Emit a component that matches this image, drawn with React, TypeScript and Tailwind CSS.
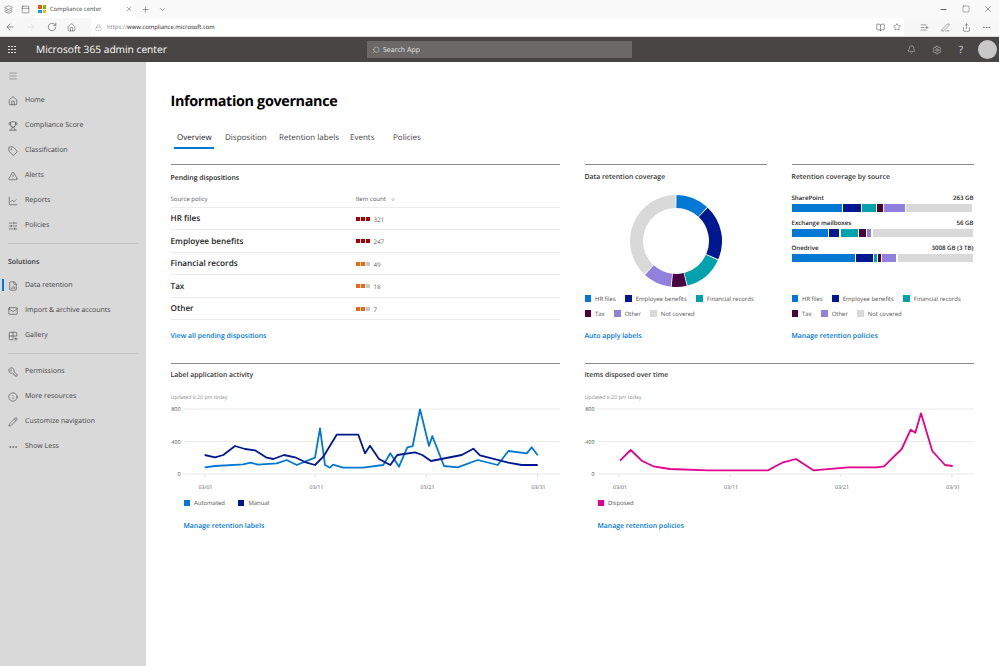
import React from "react";
import {
  ArrowLeft, ArrowRight, RotateCw, Home, Lock, BookOpen, Star, Plus, X, ChevronDown, Minus, Square,
  Ellipsis, Bell, Settings, Search, Menu, Trophy, Tag, TriangleAlert, ChartLine, SlidersHorizontal,
  FileChartColumn, Mail, Grid2x2Plus, KeyRound, Info, Pencil, ArrowDown, PenLine, Share, ListPlus, Layers, PanelTop,
} from "lucide-react";

const C = { hr: "#0078d4", emp: "#00188f", fin: "#00a2ad", tax: "#4b003f", oth: "#9180dd", not: "#d9d9d9" };

const nav1 = [
  { I: Home, t: "Home" },
  { I: Trophy, t: "Compliance Score" },
  { I: Tag, t: "Classification" },
  { I: TriangleAlert, t: "Alerts" },
  { I: ChartLine, t: "Reports" },
  { I: SlidersHorizontal, t: "Policies" },
];
const nav2 = [
  { I: FileChartColumn, t: "Data retention", active: true },
  { I: Mail, t: "Import & archive accounts" },
  { I: Grid2x2Plus, t: "Gallery" },
];
const nav3 = [
  { I: KeyRound, t: "Permissions", flip: true },
  { I: Info, t: "More resources" },
  { I: Pencil, t: "Customize navigation" },
  { I: Ellipsis, t: "Show Less" },
];

function NavItem({ I, t, active, flip }: { I: any; t: string; active?: boolean; flip?: boolean }) {
  return (
    <div className="relative flex h-[25px] items-center pl-[8px] text-[7px] text-[#444]">
      {active && <span className="absolute left-[2px] top-[6px] h-[12px] w-[2px] bg-[#0078d4]" />}
      <I size={10} strokeWidth={1.3} className={flip ? "-scale-x-100 text-[#333]" : "text-[#333]"} />
      <span className="ml-[7px] pt-[2px]">{t}</span>
    </div>
  );
}

function Legend({ items, wide }: { items: [string, string][]; wide?: boolean }) {
  return (
    <div className={`flex flex-wrap gap-y-[4px] text-[5.95px] ${wide ? "gap-x-[13px]" : "gap-x-[9.5px]"}`}>
      {items.map(([t, c]) => (
        <div key={t} className="flex h-[11px] items-center gap-[4px] text-[#555]">
          <span className="h-[6.5px] w-[6.5px]" style={{ background: c }} />
          <span className="pt-[1px]">{t}</span>
        </div>
      ))}
    </div>
  );
}

const coverage: [string, string][] = [
  ["HR files", C.hr], ["Employee benefits", C.emp], ["Financial records", C.fin],
  ["Tax", C.tax], ["Other", C.oth], ["Not covered", C.not],
];

function A({ children }: { children: React.ReactNode }) {
  return <div className="h-[12px] text-[6.9px] font-semibold leading-[15px] text-[#0078d4]">{children}</div>;
}

function polar(a: number, r: number) {
  const t = ((a - 90) * Math.PI) / 180;
  return [46 + r * Math.cos(t), 46 + r * Math.sin(t)];
}
function Donut() {
  const segs: [number, number, string][] = [
    [0, 43, C.hr], [43, 114, C.emp], [114, 166, C.fin], [166, 186, C.tax], [186, 223, C.oth], [223, 360, C.not],
  ];
  return (
    <svg width="92" height="92" viewBox="0 0 92 92">
      {segs.map(([a, b, c]) => {
        const [x1, y1] = polar(a + 0.6, 39.5);
        const [x2, y2] = polar(b - 0.6, 39.5);
        return (
          <path key={c} d={`M${x1} ${y1}A39.5 39.5 0 ${b - a > 180 ? 1 : 0} 1 ${x2} ${y2}`} fill="none" stroke={c} strokeWidth="13" />
        );
      })}
    </svg>
  );
}

const sources: { n: string; v: string; w: number[] }[] = [
  { n: "SharePoint", v: "263 GB", w: [50, 18.3, 13.7, 5.3, 20.7, 66] },
  { n: "Exchange mailboxes", v: "56 GB", w: [36.7, 10, 17, 6.7, 4.3, 100.3] },
  { n: "Onedrive", v: "3008 GB (3 TB)", w: [63, 17.3, 2.7, 2.3, 14.3, 75] },
];
const segColors = [C.hr, C.emp, C.fin, C.tax, C.oth, C.not];

const rows: [string, string, string, number][] = [
  ["HR files", "321", "#a80000", 3],
  ["Employee benefits", "247", "#a80000", 3],
  ["Financial records", "49", "#f7630c", 2],
  ["Tax", "18", "#f7630c", 2],
  ["Other", "7", "#f7630c", 2],
];

const tabs: { t: string; c: string; on?: boolean }[] = [
  { t: "Overview", c: "ml-[3.5px] w-[40px] pl-[3px]", on: true },
  { t: "Disposition", c: "ml-[11px] w-[41px]" },
  { t: "Retention labels", c: "ml-[13px] w-[59px]" },
  { t: "Events", c: "ml-[12px] w-[23px]" },
  { t: "Policies", c: "ml-[20px] w-[27px]" },
];

const auto = "204.7,467.3 215,466 243,464.3 250.7,462.7 258,464.7 276.7,463.3 286.7,460 296.7,465 315,457.7 320,428.3 325,465 330,467.7 333,464.7 343,467.7 363,467.7 383.3,465 390.3,453.3 399,466.7 407.3,447.3 412.7,446 420,409.3 429,446 432.3,436 444,466 457.7,467.3 477.7,460 497.7,465 508.3,451 526.7,453.3 531.7,447.3 537.7,455.3";
const manual = "204.7,455 215,457.3 223.3,455 235,446 245,449 255,450.3 266.7,457.7 273.3,459 284,455 295,457.3 306.7,462.7 315,465 323.3,456.7 336.7,434.7 358.3,434.7 365,453.3 370,445.7 379,459 390.3,465 397.3,455 415,452.3 422.3,455 431,461 461.7,455 473.3,448.7 480,455.3 508.3,462.7 521.7,465 537.7,465";
const disposed = "620,460.7 630.7,450 641.7,460.7 653.3,466.3 670,469 708.3,470.3 768.3,470.3 775,466.5 782.3,462.7 796,459 813.3,470.3 848.3,467.3 876.7,467.3 884,466.3 901.7,449 910.7,429.7 915.3,432.7 921,413.3 932.3,451 945,465 952.7,466";

function Chart({ ox, lines }: { ox: number; lines: [string, string][] }) {
  const gx1 = ox + 13;
  const gx2 = ox + 389;
  const ticks = [34, 145, 256, 367].map((d) => ox + d - (ox === 171 ? 0.5 : 0));
  const labels = ["03/01", "03/11", "03/21", "03/31"];
  return (
    <svg width="389" height="90" viewBox={`${ox} 403 389 90`} className="block overflow-visible">
      {[409, 441.5, 474].map((y) => (
        <line key={y} x1={gx1} x2={gx2} y1={y} y2={y} stroke="#eaeaea" strokeWidth="1" />
      ))}
      {ticks.map((x) => (
        <line key={x} x1={x} x2={x} y1={474} y2={477} stroke="#e3e3e3" strokeWidth="1" />
      ))}
      {[["800", 411], ["400", 443.5], ["0", 476]].map(([t, y]) => (
        <text key={t} x={ox + 9.5} y={y as number} textAnchor="end" fontSize="5.4" fill="#555">{t}</text>
      ))}
      {ticks.map((x, i) => (
        <text key={x} x={x + 1} y={489} textAnchor="middle" fontSize="5.2" fill="#555">{labels[i]}</text>
      ))}
      {lines.map(([p, c]) => (
        <polyline key={c} points={p} fill="none" stroke={c} strokeWidth="1.8" strokeLinejoin="round" />
      ))}
    </svg>
  );
}

function ChartCard({ title, ox, lines, legend, link }: { title: string; ox: number; lines: [string, string][]; legend: [string, string][]; link: string }) {
  return (
    <section className="w-[389px] border-t border-[#8a8a8a]">
      <h3 className="mt-[6px] h-[12px] text-[6.9px] font-semibold leading-[12px] text-[#333]">{title}</h3>
      <div className="mt-[9px] h-[12px] text-[5.2px] leading-[12px] text-[#8a8a8a]">Updated 6:20 pm today</div>
      <Chart ox={ox} lines={lines} />
      <div className="ml-[13px] mt-[4.5px]"><Legend items={legend} wide /></div>
      <div className="ml-[13px] mt-[10.5px]"><A>{link}</A></div>
    </section>
  );
}

export default function App() {
  return (
    <div className="flex h-screen w-full flex-col overflow-hidden bg-white font-['Open_Sans',sans-serif] text-[#222] [text-rendering:geometricPrecision]">
      {/* tab strip */}
      <div className="flex h-[18px] items-center bg-[#f9f9f9] text-[#333]">
        <Layers size={9} strokeWidth={1.2} className="ml-[4px]" />
        <PanelTop size={9} strokeWidth={1.2} className="ml-[8px]" />
        <div className="ml-[3px] flex h-full w-[102px] items-center bg-white pl-[5px]">
          <div className="grid h-[8px] w-[8px] grid-cols-2 gap-px">
            <span className="bg-[#f25022]" /><span className="bg-[#7fba00]" /><span className="bg-[#00a4ef]" /><span className="bg-[#ffb900]" />
          </div>
          <span className="ml-[4px] text-[5.9px] text-[#444]">Compliance center</span>
          <X size={8} strokeWidth={1.2} className="ml-auto mr-[2px]" />
        </div>
        <Plus size={9} strokeWidth={1.2} className="ml-[5.5px]" />
        <ChevronDown size={9} strokeWidth={1.2} className="ml-[8px]" />
        <Minus size={9} strokeWidth={2} className="ml-auto" />
        <Square size={8} strokeWidth={1.2} className="ml-[14px]" />
        <X size={10} strokeWidth={1.2} className="ml-[13px] mr-[6px]" />
      </div>
      {/* address row */}
      <div className="flex h-[19px] items-center border-b border-[#dcdcdc] bg-[#f7f7f7] text-[#333]">
        <ArrowLeft size={10} strokeWidth={1.2} className="ml-[5px]" />
        <ArrowRight size={10} strokeWidth={1.2} className="ml-[11px] text-[#d0d0d0]" />
        <RotateCw size={10} strokeWidth={1.2} className="ml-[11px]" />
        <Home size={9} strokeWidth={1.2} className="ml-[10px]" />
        <div className="ml-[15px] flex h-full w-[813px] items-center bg-white">
          <Lock size={7} strokeWidth={1.2} className="ml-[4px] text-[#777]" />
          <span className="ml-[5px] pt-[1px] text-[5.9px] text-[#222]"><span className="text-[#888]">https://</span>www.compliance.microsoft.com</span>
          <BookOpen size={9} strokeWidth={1.3} className="ml-auto" />
          <Star size={8} strokeWidth={1.3} className="ml-[8px] mr-[3px]" />
        </div>
        <ListPlus size={9} strokeWidth={1.2} className="ml-[16px]" />
        <PenLine size={9} strokeWidth={1.2} className="ml-[12px]" />
        <Share size={9} strokeWidth={1.2} className="ml-[12px]" />
        <Ellipsis size={9} strokeWidth={1.2} className="ml-[11px]" />
      </div>
      {/* app header */}
      <header className="flex h-[25px] items-center bg-[#484644] text-white">
        <div className="ml-[8px] grid w-[8px] grid-cols-3 gap-[1.5px]">
          {Array.from({ length: 9 }).map((_, i) => <span key={i} className="h-[1.5px] w-[1.5px] bg-[#e0e0e0]" />)}
        </div>
        <div className="ml-[20px] w-[331px] pt-[1px] text-[10.2px] font-medium">Microsoft 365 admin center</div>
        <div className="flex h-[17px] w-[265px] items-center bg-[#6a6967] text-[#e4e4e4]">
          <Search size={8} strokeWidth={1.3} className="ml-[5px] -scale-x-100" />
          <span className="ml-[3px] pt-[3px] text-[7px]">Search App</span>
        </div>
        <Bell size={9} strokeWidth={1.3} className="ml-auto text-[#ddd]" />
        <Settings size={10} strokeWidth={1.2} className="ml-[16px] text-[#ddd]" />
        <span className="ml-[14px] w-[10px] text-center text-[10px] text-[#ddd]">?</span>
        <div className="ml-[12px] mr-[2px] h-[19px] w-[19px] rounded-full bg-[#c8c8c8]" />
      </header>
      <div className="flex min-h-0 flex-1">
        {/* sidebar */}
        <aside className="w-[145.5px] shrink-0 bg-[#d9d9d9] pt-[1px]">
          <div className="flex h-[25px] items-center pl-[8px]">
            <Menu size={10} strokeWidth={1.2} className="text-[#555]" />
          </div>
          {nav1.map((n) => <NavItem key={n.t} {...n} />)}
          <div className="mx-[8px] mt-[5px] border-t border-[#c4c4c4]" />
          <div className="mt-[13px] h-[11px] pl-[8px] text-[7px] font-semibold leading-[12px] text-[#333]">Solutions</div>
          <div className="mt-[5px]">{nav2.map((n) => <NavItem key={n.t} {...n} />)}</div>
          <div className="mx-[8px] mt-[5px] border-t border-[#c4c4c4]" />
          <div className="mt-[5px]">{nav3.map((n) => <NavItem key={n.t} {...n} />)}</div>
        </aside>
        {/* main */}
        <main className="flex-1 pl-[25px]">
          <h1 className="mt-[28px] h-[24px] text-[14.4px] font-bold leading-[24px] tracking-[-0.35px] text-black">Information governance</h1>
          <nav className="mt-[16.7px] flex text-[8px] text-[#444]">
            {tabs.map(({ t, c, on }) => (
              <div key={t} className={`${c} h-[18.3px] whitespace-nowrap pt-[1px] leading-[12px] ${on ? "border-b-2 border-[#0078d4] text-[#222]" : ""}`}>{t}</div>
            ))}
          </nav>
          <div className="mt-[15px] grid grid-cols-[389px_182px_182px] gap-x-[25px]">
            <section className="flex h-[177px] flex-col border-t border-[#8a8a8a]">
              <h3 className="mt-[8.5px] h-[10.5px] text-[6.9px] font-semibold leading-[12px] text-[#222]">Pending dispositions</h3>
              <div className="flex h-[24px] items-center border-b border-[#ececec] pt-[8px] text-[6px] text-[#555]">
                <span className="w-[185px]">Source policy</span>
                <span>Item count</span>
                <ArrowDown size={6} strokeWidth={1} className="ml-[4px]" />
              </div>
              {rows.map(([n, v, c, k]) => (
                <div key={n} className="flex h-[22.5px] items-center border-b border-[#ececec]">
                  <span className="w-[185px] pt-[1.5px] text-[8.2px] font-semibold text-[#222]">{n}</span>
                  <span className="flex gap-[1px]">
                    {[0, 1, 2].map((i) => (
                      <span key={i} className="h-[4px] w-[4.3px]" style={{ background: i < k ? c : "#c8c8c8" }} />
                    ))}
                  </span>
                  <span className="ml-[3px] pt-[1px] text-[6.2px] text-[#666]">{v}</span>
                </div>
              ))}
              <div className="mt-auto"><A>View all pending dispositions</A></div>
            </section>
            <section className="flex h-[177px] flex-col border-t border-[#8a8a8a]">
              <h3 className="mt-[7.5px] h-[10px] text-[6.9px] font-semibold leading-[12px] text-[#333]">Data retention coverage</h3>
              <div className="mt-[12.5px] flex justify-center"><Donut /></div>
              <div className="mt-auto"><Legend items={coverage} /></div>
              <div className="mt-[10px]"><A>Auto apply labels</A></div>
            </section>
            <section className="flex h-[177px] flex-col border-t border-[#8a8a8a]">
              <h3 className="mt-[7.5px] h-[10px] text-[6.9px] font-semibold leading-[12px] text-[#333]">Retention coverage by source</h3>
              <div className="mt-[9.5px]">
                {sources.map((s) => (
                  <div key={s.n} className="h-[25px]">
                    <div className="flex h-[12.5px] justify-between text-[6.1px] font-semibold leading-[12.5px] text-[#222]">
                      <span>{s.n}</span><span>{s.v}</span>
                    </div>
                    <div className="flex h-[8px] gap-[1.3px]">
                      {s.w.map((w, i) => <span key={i} style={{ width: w, background: segColors[i] }} />)}
                    </div>
                  </div>
                ))}
              </div>
              <div className="mt-auto"><Legend items={coverage} /></div>
              <div className="mt-[10px]"><A>Manage retention policies</A></div>
            </section>
          </div>
          <div className="mt-[22px] flex gap-[25px]">
            <ChartCard
              title="Label application activity"
              ox={171}
              lines={[[auto, "#0078d4"], [manual, "#00188f"]]}
              legend={[["Automated", "#0078d4"], ["Manual", "#00188f"]]}
              link="Manage retention labels"
            />
            <ChartCard
              title="Items disposed over time"
              ox={585}
              lines={[[disposed, "#e3008c"]]}
              legend={[["Disposed", "#e3008c"]]}
              link="Manage retention policies"
            />
          </div>
        </main>
      </div>
    </div>
  );
}
